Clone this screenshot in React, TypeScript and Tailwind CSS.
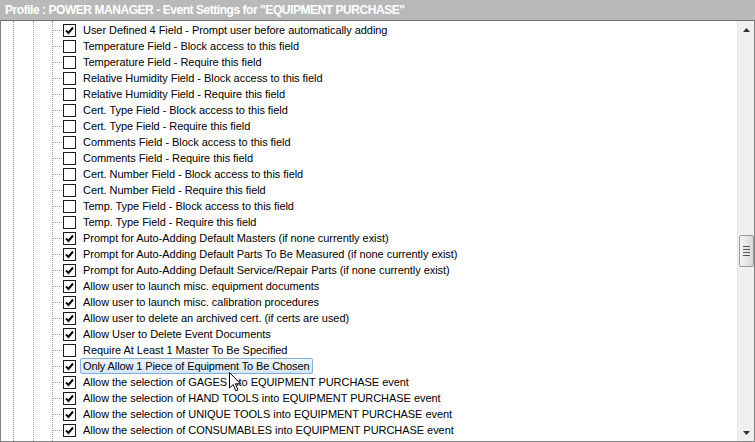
import React from 'react';

const rows: { label: string; checked: boolean }[] = [
  { label: 'User Defined 4 Field - Prompt user before automatically adding', checked: true },
  { label: 'Temperature Field - Block access to this field', checked: false },
  { label: 'Temperature Field - Require this field', checked: false },
  { label: 'Relative Humidity Field - Block access to this field', checked: false },
  { label: 'Relative Humidity Field - Require this field', checked: false },
  { label: 'Cert. Type Field - Block access to this field', checked: false },
  { label: 'Cert. Type Field - Require this field', checked: false },
  { label: 'Comments Field - Block access to this field', checked: false },
  { label: 'Comments Field - Require this field', checked: false },
  { label: 'Cert. Number Field - Block access to this field', checked: false },
  { label: 'Cert. Number Field - Require this field', checked: false },
  { label: 'Temp. Type Field - Block access to this field', checked: false },
  { label: 'Temp. Type Field - Require this field', checked: false },
  { label: 'Prompt for Auto-Adding Default Masters (if none currently exist)', checked: true },
  { label: 'Prompt for Auto-Adding Default Parts To Be Measured (if none currently exist)', checked: true },
  { label: 'Prompt for Auto-Adding Default Service/Repair Parts (if none currently exist)', checked: true },
  { label: 'Allow user to launch misc. equipment documents', checked: true },
  { label: 'Allow user to launch misc. calibration procedures', checked: true },
  { label: 'Allow user to delete an archived cert. (if certs are used)', checked: true },
  { label: 'Allow User to Delete Event Documents', checked: true },
  { label: 'Require At Least 1 Master To Be Specified', checked: false },
  { label: 'Only Allow 1 Piece of Equipment To Be Chosen', checked: true },
  { label: 'Allow the selection of GAGES into EQUIPMENT PURCHASE event', checked: true },
  { label: 'Allow the selection of HAND TOOLS into EQUIPMENT PURCHASE event', checked: true },
  { label: 'Allow the selection of UNIQUE TOOLS into EQUIPMENT PURCHASE event', checked: true },
  { label: 'Allow the selection of CONSUMABLES into EQUIPMENT PURCHASE event', checked: true },
];

const SELECTED = 21;

const Checkbox: React.FC<{ checked: boolean }> = ({ checked }) => (
  <div className="w-[13px] h-[13px] border border-[#1c1c1c] bg-white flex items-center justify-center shrink-0">
    {checked && (
      <svg width="9" height="9" viewBox="0 0 9 9">
        <path d="M1 4.5 L3.5 7 L8 1.5" fill="none" stroke="#000" strokeWidth="2" />
      </svg>
    )}
  </div>
);

const VDots: React.FC = () => (
  <div className="w-px h-full border-l border-dotted border-[#a0a0a0]" />
);

export default function App() {
  return (
    <div className="w-[755px] h-[442px] bg-white flex flex-col overflow-hidden" style={{ fontFamily: '"Liberation Sans", Arial, sans-serif' }}>
      {/* Title */}
      <div className="h-[20px] bg-[#b9b9b9] flex items-center px-[5px] shrink-0">
        <span className="text-white font-bold text-[12px] tracking-[-0.45px] leading-none">
          Profile : POWER MANAGER - Event Settings for "EQUIPMENT PURCHASE"
        </span>
      </div>

      <div className="flex-1 flex border border-[#828282] border-t-[#6e6e6e] min-h-0">
        {/* Tree */}
        <div className="flex-1 relative flex min-w-0">
          <div className="w-[12px] shrink-0" />
          <VDots />
          <div className="w-[19px] shrink-0" />
          <VDots />
          <div className="w-[18px] shrink-0" />
          <div className="flex-1 flex flex-col pt-[1px] min-w-0 relative">
            <div className="absolute left-0 top-0 bottom-0 border-l border-dotted border-[#a0a0a0]" />
            {rows.map((r, i) => (
              <div key={i} className="h-[16px] flex items-center shrink-0">
                <div className="w-[10px] border-t border-dotted border-[#a0a0a0] shrink-0" />
                <div className="w-[1px] shrink-0" />
                <Checkbox checked={r.checked} />
                {i === SELECTED ? (
                  <div className="ml-[4px] h-[16px] px-[2px] flex items-center rounded-[2px] border border-[#84acdd] bg-gradient-to-b from-[#eef5fd] to-[#d5e6f9] text-[11px] tracking-[-0.1px] text-black whitespace-nowrap">
                    {r.label}
                  </div>
                ) : (
                  <span className="ml-[7px] text-[11px] tracking-[-0.05px] text-black whitespace-nowrap leading-none">{r.label}</span>
                )}
              </div>
            ))}
          </div>
          {/* Mouse cursor */}
          <svg className="absolute left-[228px] top-[351px]" width="14" height="22" viewBox="0 0 14 22">
            <path d="M0.5 0.5 L0.5 16 L4.2 12.6 L6.8 18.8 L9 17.8 L6.4 11.8 L11.5 11.8 Z" fill="white" stroke="black" strokeWidth="1" />
          </svg>
        </div>

        {/* Scrollbar */}
        <div className="w-[17px] shrink-0 bg-[#f0f0f0] border-l border-[#e6e6e6] flex flex-col items-center">
          <div className="h-[17px] w-full flex items-center justify-center">
            <svg width="7" height="4" viewBox="0 0 7 4"><path d="M3.5 0 L7 4 L0 4 Z" fill="#333" /></svg>
          </div>
          <div className="h-[197px]" />
          <div className="w-[15px] h-[32px] rounded-[2px] border border-[#9a9a9a] bg-gradient-to-r from-[#f4f4f4] to-[#d9d9d9] flex flex-col items-center justify-center gap-[2px]">
            <div className="w-[7px] h-px bg-[#555]" />
            <div className="w-[7px] h-px bg-[#555]" />
            <div className="w-[7px] h-px bg-[#555]" />
            <div className="w-[7px] h-px bg-[#555]" />
          </div>
          <div className="flex-1" />
          <div className="h-[17px] w-full flex items-center justify-center">
            <svg width="7" height="4" viewBox="0 0 7 4"><path d="M0 0 L7 0 L3.5 4 Z" fill="#333" /></svg>
          </div>
        </div>
      </div>
    </div>
  );
}
